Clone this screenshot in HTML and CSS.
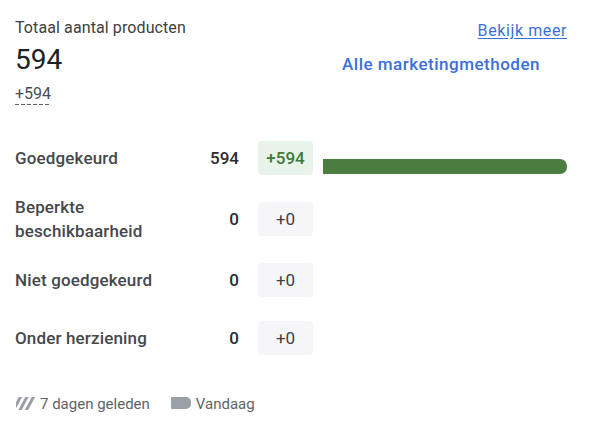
FILE: index.html
```html
<!DOCTYPE html>
<html lang="nl">
<head>
<meta charset="utf-8">
<title>Totaal aantal producten</title>
<link rel="stylesheet" href="styles.css">
</head>
<body>
<div class="card">
  <div class="header">
    <div class="summary">
      <div class="title">Totaal aantal producten</div>
      <div class="total">594</div>
      <div class="delta"><span class="delta-value">+594</span></div>
    </div>
    <div class="actions">
      <a class="more" href="#">Bekijk meer</a>
      <button class="filter" type="button">Alle marketingmethoden</button>
    </div>
  </div>

  <div class="rows">
    <div class="row">
      <div class="label">Goedgekeurd</div>
      <div class="count">594</div>
      <div class="badge badge-positive">+594</div>
      <div class="track"><div class="fill" style="width:100%"></div></div>
    </div>
    <div class="row row-tall">
      <div class="label">Beperkte<br>beschikbaarheid</div>
      <div class="count">0</div>
      <div class="badge">+0</div>
      <div class="track"></div>
    </div>
    <div class="row">
      <div class="label">Niet goedgekeurd</div>
      <div class="count">0</div>
      <div class="badge">+0</div>
      <div class="track"></div>
    </div>
    <div class="row">
      <div class="label">Onder herziening</div>
      <div class="count">0</div>
      <div class="badge">+0</div>
      <div class="track"></div>
    </div>
  </div>

  <div class="legend">
    <div class="legend-item">
      <svg class="hatch" width="19" height="13" viewBox="0 0 19 13" aria-hidden="true">
        <defs><clipPath id="hc"><rect x="0" y="0" width="19" height="13"/></clipPath></defs>
        <g clip-path="url(#hc)" stroke="#9aa0a6" stroke-width="3">
          <line x1="-3" y1="14" x2="5" y2="-1"/>
          <line x1="3.5" y1="14" x2="11.5" y2="-1"/>
          <line x1="10" y1="14" x2="18" y2="-1"/>
        </g>
      </svg>
      <span>7 dagen geleden</span>
    </div>
    <div class="legend-item">
      <span class="swatch"></span>
      <span>Vandaag</span>
    </div>
  </div>
</div>
</body>
</html>
```

FILE: styles.css
```css
html, body {
  margin: 0;
  padding: 0;
  background: #ffffff;
}

body {
  font-family: Roboto, "Liberation Sans", Arial, sans-serif;
  color: #3c4043;
}

.card {
  padding: 18px 23px 0 15px;
}

.header {
  display: flex;
  justify-content: space-between;
  align-items: flex-start;
}

.summary {
  display: flex;
  flex-direction: column;
  align-items: flex-start;
}

.title {
  font-size: 16px;
  line-height: 20px;
  letter-spacing: 0.1px;
  color: #3c4043;
}

.total {
  margin-top: 4px;
  font-size: 28px;
  line-height: 36px;
  color: #202124;
}

.delta {
  margin-top: 6px;
  font-size: 16px;
  line-height: 20px;
  color: #4a4d51;
}

.delta-value {
  display: inline-block;
  padding-bottom: 1px;
  background-image: repeating-linear-gradient(to right, #5f6368 0 4px, transparent 4px 6px);
  background-size: 100% 1px;
  background-repeat: no-repeat;
  background-position: left bottom;
}

.actions {
  display: flex;
  flex-direction: column;
  align-items: flex-end;
}

.more {
  margin-top: 3px;
  font-size: 16px;
  line-height: 20px;
  letter-spacing: 0.6px;
  color: #3a6fdc;
  text-decoration: underline;
  text-underline-offset: 2px;
}

.filter {
  margin-top: 13px;
  margin-right: 27px;
  padding: 0;
  border: 0;
  background: none;
  font-family: Roboto, "Liberation Sans", Arial, sans-serif;
  font-size: 17px;
  font-weight: 500;
  line-height: 20px;
  letter-spacing: 0.5px;
  color: #3a6fdc;
  cursor: pointer;
}

.rows {
  margin-top: 24px;
  display: flex;
  flex-direction: column;
}

.row {
  display: flex;
  align-items: center;
  padding: 12px 0;
}

.row-tall {
  padding: 8px 0;
}

.label {
  flex: 1;
  font-size: 17px;
  font-weight: 500;
  line-height: 20px;
  letter-spacing: 0.15px;
  color: #45484c;
}

.row-tall .label {
  line-height: 24px;
}

.count {
  width: 39px;
  text-align: right;
  font-size: 17px;
  font-weight: 500;
  line-height: 20px;
  color: #2a2c2f;
}

.badge {
  width: 55px;
  height: 34px;
  margin-left: 19px;
  border-radius: 4px;
  background: #f6f6f8;
  display: flex;
  align-items: center;
  justify-content: center;
  font-size: 17px;
  line-height: 20px;
  color: #3c4043;
}

.badge-positive {
  background: #e8f3e9;
  color: #3b7a3a;
  font-weight: 500;
}

.track {
  width: 244px;
  margin-left: 10px;
  align-self: flex-end;
  margin-bottom: 1px;
  height: 15px;
}

.fill {
  height: 100%;
  background: #4a7d3f;
  border-radius: 0 7px 7px 0;
}

.legend {
  margin-top: 27px;
  display: flex;
  align-items: center;
  gap: 21px;
  padding-left: 1px;
  font-size: 15px;
  line-height: 20px;
  color: #5f6368;
}

.legend-item {
  display: flex;
  align-items: center;
  gap: 5px;
}

.hatch {
  display: block;
  margin-top: -2px;
}

.swatch {
  display: block;
  width: 20px;
  height: 12px;
  margin-top: -3px;
  background: #9aa0a6;
  border-radius: 1px 5px 5px 1px;
}
```
